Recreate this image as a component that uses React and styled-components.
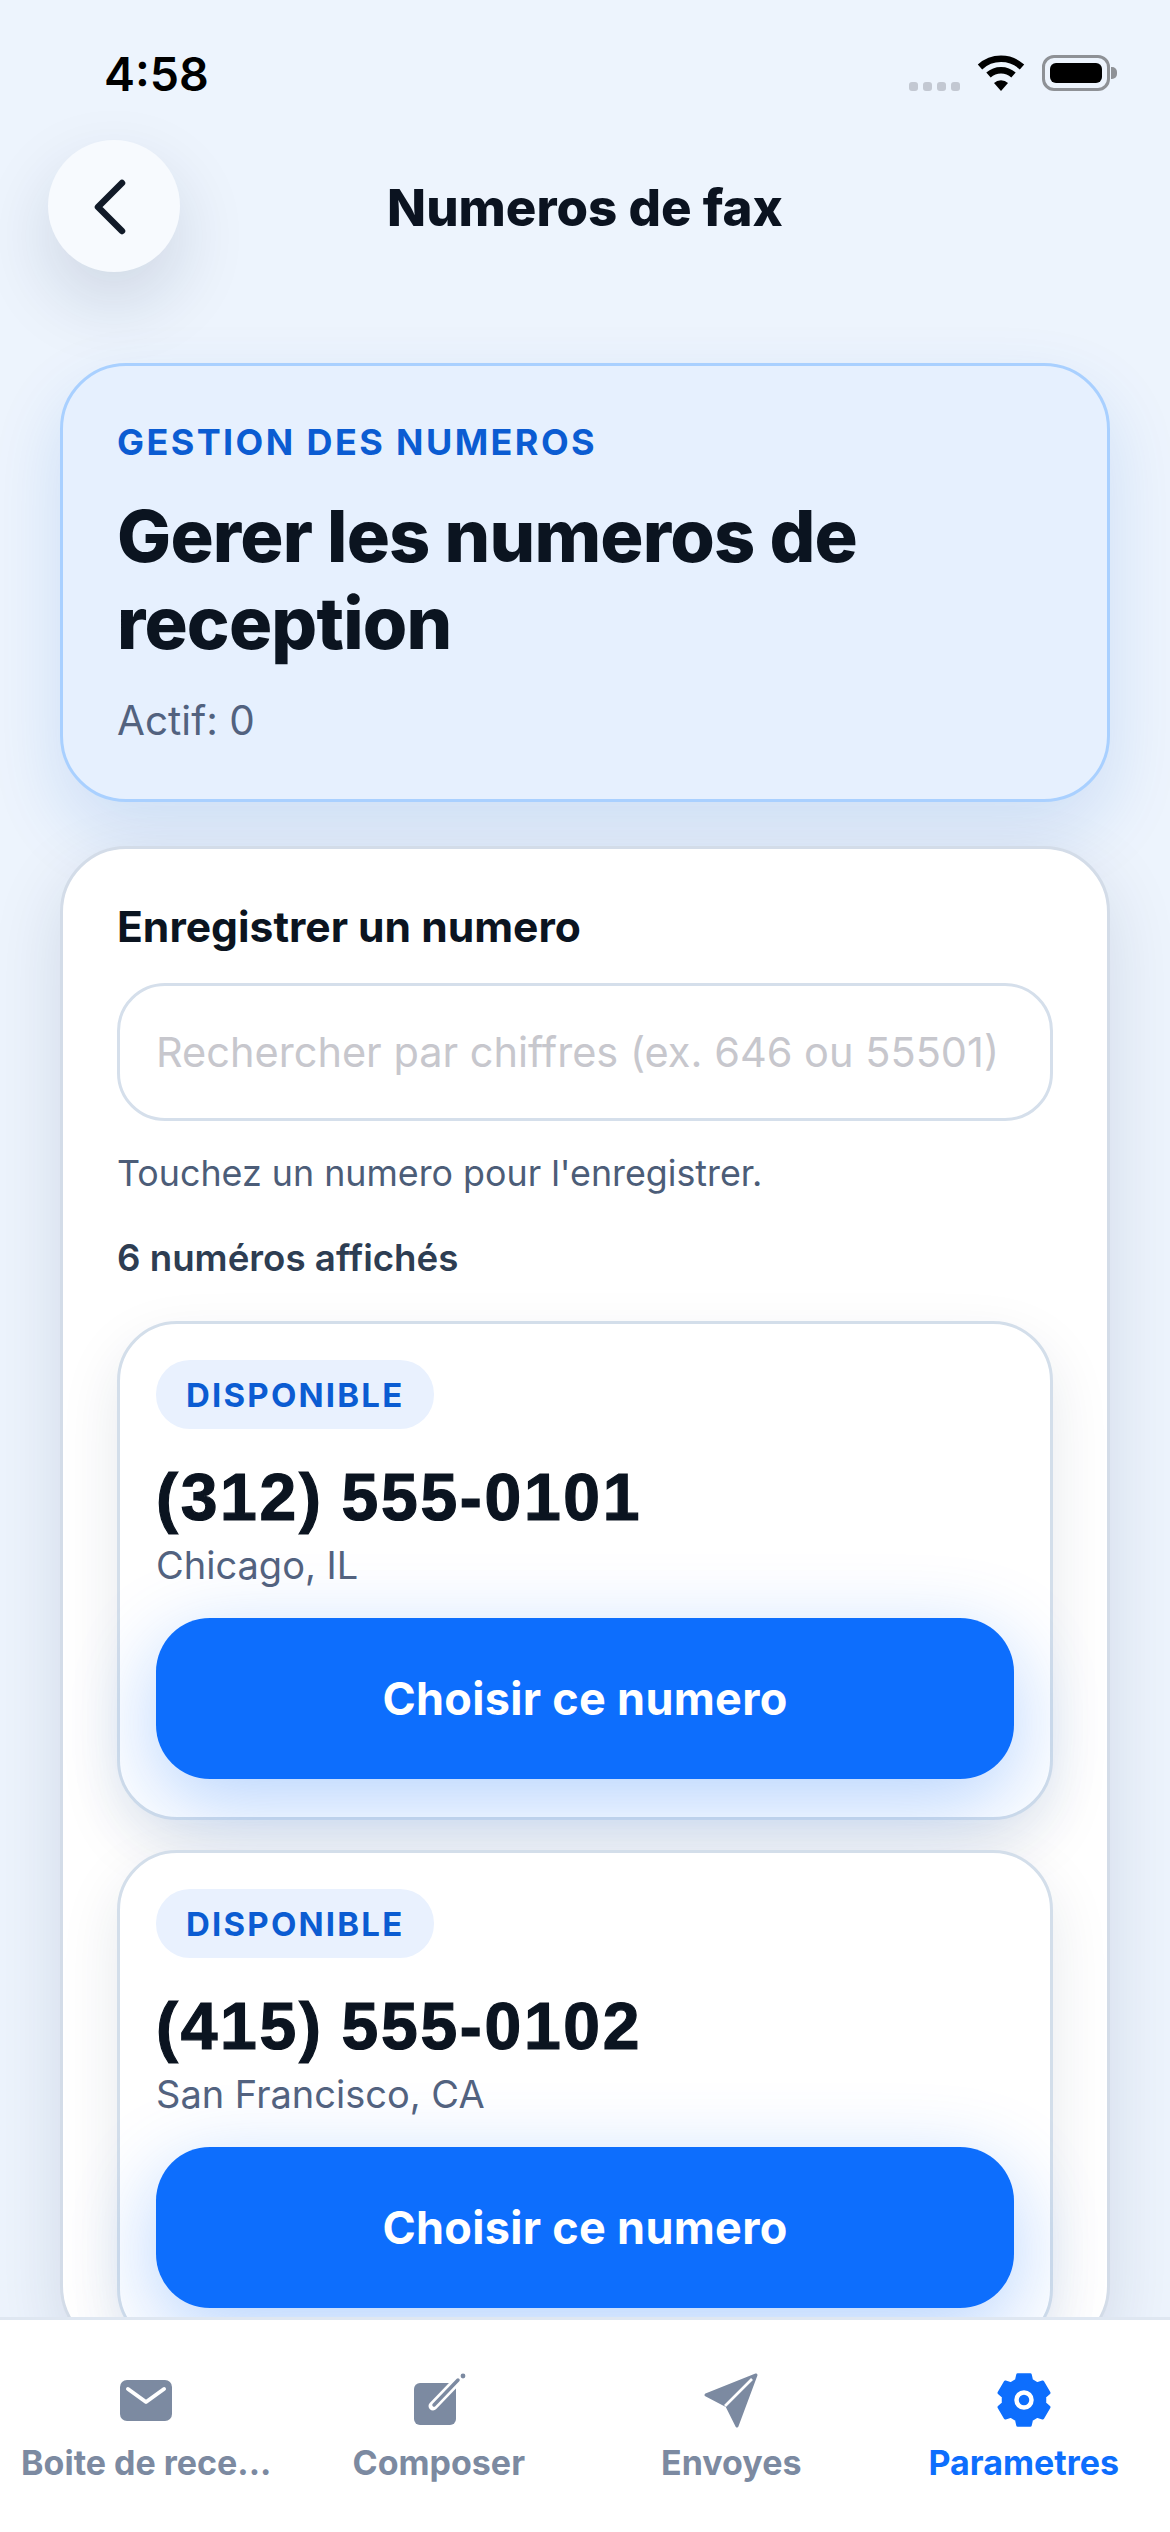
import React from 'react';
import styled, { createGlobalStyle } from 'styled-components';

const Global = createGlobalStyle`
  html, body { margin: 0; padding: 0; background: #edf4fd; }
  body { font-family: Inter, "Noto Sans", sans-serif; }
  * { box-sizing: border-box; }
`;

const Screen = styled.div`
  position: relative;
  width: 1170px;
  height: 2532px;
  overflow: hidden;
  background: #edf4fd;
`;
const StatusBar = styled.div`
  height: 140px;
  padding: 47px 60px 0 104px;
  display: flex;
  align-items: flex-start;
  justify-content: space-between;
`;
const Time = styled.div`
  font-size: 46.5px;
  line-height: 54px;
  font-weight: 600;
  color: #000;
`;
const StatusIcons = styled.div`
  display: flex;
  align-items: flex-start;
  margin-top: 8px;
`;
const Dots = styled.div`
  display: flex;
  gap: 5px;
  margin-top: 27px;
  margin-right: 17px;
`;
const Dot = styled.span`
  width: 9px;
  height: 9px;
  border-radius: 3px;
  background: #c3c8d2;
`;
const WifiIcon = styled.svg`
  width: 48px;
  height: 36px;
  margin-right: 17px;
`;
const Battery = styled.div`
  position: relative;
  width: 68px;
  height: 36px;
  padding: 5px;
  border: 3px solid #8e9196;
  border-radius: 12px;
`;
const BatteryFill = styled.div`
  width: 100%;
  height: 100%;
  background: #000;
  border-radius: 6px;
`;
const BatteryTip = styled.span`
  position: absolute;
  right: -10px;
  top: 9px;
  width: 6px;
  height: 12px;
  border-radius: 0 5px 5px 0;
  background: #8e9196;
`;
const Header = styled.header`
  display: grid;
  grid-template-columns: 132px 1fr 132px;
  align-items: center;
  padding: 0 48px;
  height: 132px;
`;
const BackButton = styled.button`
  width: 132px;
  height: 132px;
  padding: 0;
  border: none;
  border-radius: 50%;
  background: #f7fafe;
  box-shadow: 0 30px 72px rgba(15, 35, 70, 0.14);
  display: flex;
  align-items: center;
  justify-content: center;
`;
const Title = styled.h1`
  margin: 3px 0 0;
  text-align: center;
  font-size: 51px;
  line-height: 62px;
  font-weight: 800;
  color: #0b1320;
`;
const Content = styled.main`
  padding: 91px 60px 0;
  display: flex;
  flex-direction: column;
  gap: 44px;
`;
const Hero = styled.section`
  padding: 55px 54px 54px;
  height: 439px;
  border: 3px solid #a9d0ff;
  border-radius: 66px;
  background: #e6f0fe;
  box-shadow: 0 30px 72px rgba(13, 90, 200, 0.14);
`;
const Eyebrow = styled.div`
  font-size: 36px;
  line-height: 42px;
  font-weight: 700;
  letter-spacing: 2.4px;
  color: #0b5cd2;
`;
const HeroTitle = styled.h2`
  margin: 29px 0 0;
  font-size: 72px;
  line-height: 87px;
  font-weight: 800;
  letter-spacing: -0.8px;
  color: #0b1420;
`;
const HeroMeta = styled.div`
  margin-top: 28px;
  font-size: 40.5px;
  line-height: 54px;
  color: #52627f;
`;
const Panel = styled.section`
  padding: 51px 54px 0;
  border: 3px solid #d3dce8;
  border-radius: 66px;
  background: #fff;
  box-shadow: 0 24px 72px rgba(15, 35, 70, 0.12);
`;
const PanelTitle = styled.h3`
  margin: 0;
  font-size: 42.6px;
  line-height: 54px;
  font-weight: 700;
  color: #0b1420;
`;
const SearchInput = styled.input`
  display: block;
  width: 100%;
  height: 138px;
  margin-top: 29px;
  padding: 0 36px;
  border: 3px solid #d5dfeb;
  border-radius: 48px;
  background: #fff;
  font-family: inherit;
  font-size: 41.5px;
  outline: none;
  &::placeholder { color: #c7c7cd; opacity: 1; }
`;
const Hint = styled.p`
  margin: 28px 0 0;
  font-size: 35.8px;
  line-height: 48px;
  color: #4c5d78;
`;
const Count = styled.p`
  margin: 37px 0 0;
  font-size: 36.7px;
  line-height: 48px;
  font-weight: 600;
  color: #2d3d52;
`;
const List = styled.div`
  margin-top: 39px;
  display: flex;
  flex-direction: column;
  gap: 30px;
`;
const NumberCard = styled.article`
  padding: 36px 36px 38px;
  border: 3px solid #d3deea;
  border-radius: 60px;
  background: #fff;
  box-shadow: 0 24px 60px rgba(15, 35, 70, 0.1);
`;
const Badge = styled.span`
  display: inline-flex;
  align-items: center;
  height: 69px;
  padding: 0 30px;
  border-radius: 34px;
  background: #e9f1fe;
  font-size: 33px;
  font-weight: 700;
  letter-spacing: 2.2px;
  color: #0b5cd2;
`;
const Phone = styled.div`
  margin-top: 30px;
  font-family: "Liberation Sans", Arial, sans-serif;
  font-size: 66px;
  line-height: 76px;
  font-weight: 700;
  letter-spacing: 2.7px;
  word-spacing: -3px;
  color: #0b1420;
  -webkit-text-stroke: 1.2px #0b1420;
`;
const City = styled.div`
  margin-top: 6px;
  font-size: 38px;
  line-height: 48px;
  color: #52627f;
`;
const ChooseButton = styled.button`
  display: block;
  width: 100%;
  height: 161px;
  margin-top: 29px;
  border: none;
  border-radius: 54px;
  background: #0d6efd;
  box-shadow: 0 24px 84px rgba(13, 110, 253, 0.3);
  color: #fff;
  font-family: inherit;
  font-size: 45px;
  font-weight: 700;
  letter-spacing: 0.3px;
`;
const TabBar = styled.nav`
  position: absolute;
  left: 0;
  right: 0;
  bottom: 0;
  height: 215px;
  padding-top: 44px;
  display: grid;
  grid-template-columns: repeat(4, 1fr);
  background: #fff;
  border-top: 3px solid #dfe7f1;
`;
const Tab = styled.div`
  display: flex;
  flex-direction: column;
  align-items: center;
  color: ${p => (p.$active ? '#0d6efd' : '#7c8aa1')};
`;
const TabIcon = styled.svg`
  width: 72px;
  height: 72px;
  display: block;
`;
const TabLabel = styled.span`
  margin-top: 3px;
  font-size: 34px;
  line-height: 48px;
  font-weight: 700;
  white-space: nowrap;
`;

const gearPath = (() => {
  const c = 36, rO = 27, rI = 21;
  const pt = (r, a) => `${(c + r * Math.cos(a * Math.PI / 180)).toFixed(2)} ${(c + r * Math.sin(a * Math.PI / 180)).toFixed(2)}`;
  let d = '';
  for (let i = 0; i < 6; i++) {
    const a = -90 + i * 60;
    d += `${i === 0 ? 'M' : 'L'}${pt(rI, a - 21)} L${pt(rO - 1, a - 14)} L${pt(rO - 1, a + 14)} L${pt(rI, a + 21)} `;
  }
  return d + 'Z';
})();

const numbers = [
  { phone: '(312) 555-0101', city: 'Chicago, IL' },
  { phone: '(415) 555-0102', city: 'San Francisco, CA' },
];

export default function App() {
  return (
    <Screen>
      <Global />
      <StatusBar>
        <Time>4:58</Time>
        <StatusIcons>
          <Dots><Dot /><Dot /><Dot /><Dot /></Dots>
          <WifiIcon viewBox="0 0 48 36">
            <path d="M3 12 A31 31 0 0 1 45 12" fill="none" stroke="#000" strokeWidth="6.5" strokeLinejoin="round" />
            <path d="M11.5 20 A18.5 18.5 0 0 1 36.5 20" fill="none" stroke="#000" strokeWidth="6.5" />
            <path d="M17 28 A10 10 0 0 1 31 28 L24 36 Z" fill="#000" />
          </WifiIcon>
          <Battery><BatteryFill /><BatteryTip /></Battery>
        </StatusIcons>
      </StatusBar>
      <Header>
        <BackButton aria-label="Retour">
          <svg width="72" height="72" viewBox="0 0 72 72">
            <path d="M44 13 L20 37 L44 61" fill="none" stroke="#111a28" strokeWidth="6.5" strokeLinecap="round" strokeLinejoin="round" />
          </svg>
        </BackButton>
        <Title>Numeros de fax</Title>
        <span />
      </Header>
      <Content>
        <Hero>
          <Eyebrow>GESTION DES NUMEROS</Eyebrow>
          <HeroTitle>Gerer les numeros de reception</HeroTitle>
          <HeroMeta>Actif: 0</HeroMeta>
        </Hero>
        <Panel>
          <PanelTitle>Enregistrer un numero</PanelTitle>
          <SearchInput placeholder="Rechercher par chiffres (ex. 646 ou 55501)" />
          <Hint>Touchez un numero pour l'enregistrer.</Hint>
          <Count>6 numéros affichés</Count>
          <List>
            {numbers.map(n => (
              <NumberCard key={n.phone}>
                <Badge>DISPONIBLE</Badge>
                <Phone>{n.phone}</Phone>
                <City>{n.city}</City>
                <ChooseButton>Choisir ce numero</ChooseButton>
              </NumberCard>
            ))}
          </List>
        </Panel>
      </Content>
      <TabBar>
        <Tab>
          <TabIcon viewBox="0 0 72 72">
            <rect x="10" y="16" width="52" height="41" rx="7" fill="currentColor" />
            <path d="M18 25 L36 38 L54 25" fill="none" stroke="#fff" strokeWidth="4" strokeLinecap="round" strokeLinejoin="round" />
          </TabIcon>
          <TabLabel>Boite de rece...</TabLabel>
        </Tab>
        <Tab>
          <TabIcon viewBox="0 0 72 72">
            <rect x="11" y="19" width="42" height="42" rx="6" fill="currentColor" />
            <path d="M30 42 L54 17" fill="none" stroke="#fff" strokeWidth="9" strokeLinecap="round" />
            <path d="M31 41 L55 16" fill="none" stroke="currentColor" strokeWidth="3.5" strokeLinecap="round" />
            <circle cx="60" cy="12" r="2.4" fill="currentColor" />
          </TabIcon>
          <TabLabel>Composer</TabLabel>
        </Tab>
        <Tab>
          <TabIcon viewBox="0 0 72 72">
            <path d="M11 31 L61 11 L42 62 L32 42 Z" fill="currentColor" stroke="currentColor" strokeWidth="3" strokeLinejoin="round" />
            <path d="M57 15 L30 42" fill="none" stroke="#fff" strokeWidth="2.6" />
          </TabIcon>
          <TabLabel>Envoyes</TabLabel>
        </Tab>
        <Tab $active>
          <TabIcon viewBox="0 0 72 72">
            <path d={gearPath} fill="currentColor" stroke="currentColor" strokeWidth="3" strokeLinejoin="round" />
            <circle cx="36" cy="36" r="7.5" fill="none" stroke="#fff" strokeWidth="4.5" />
          </TabIcon>
          <TabLabel>Parametres</TabLabel>
        </Tab>
      </TabBar>
    </Screen>
  );
}
